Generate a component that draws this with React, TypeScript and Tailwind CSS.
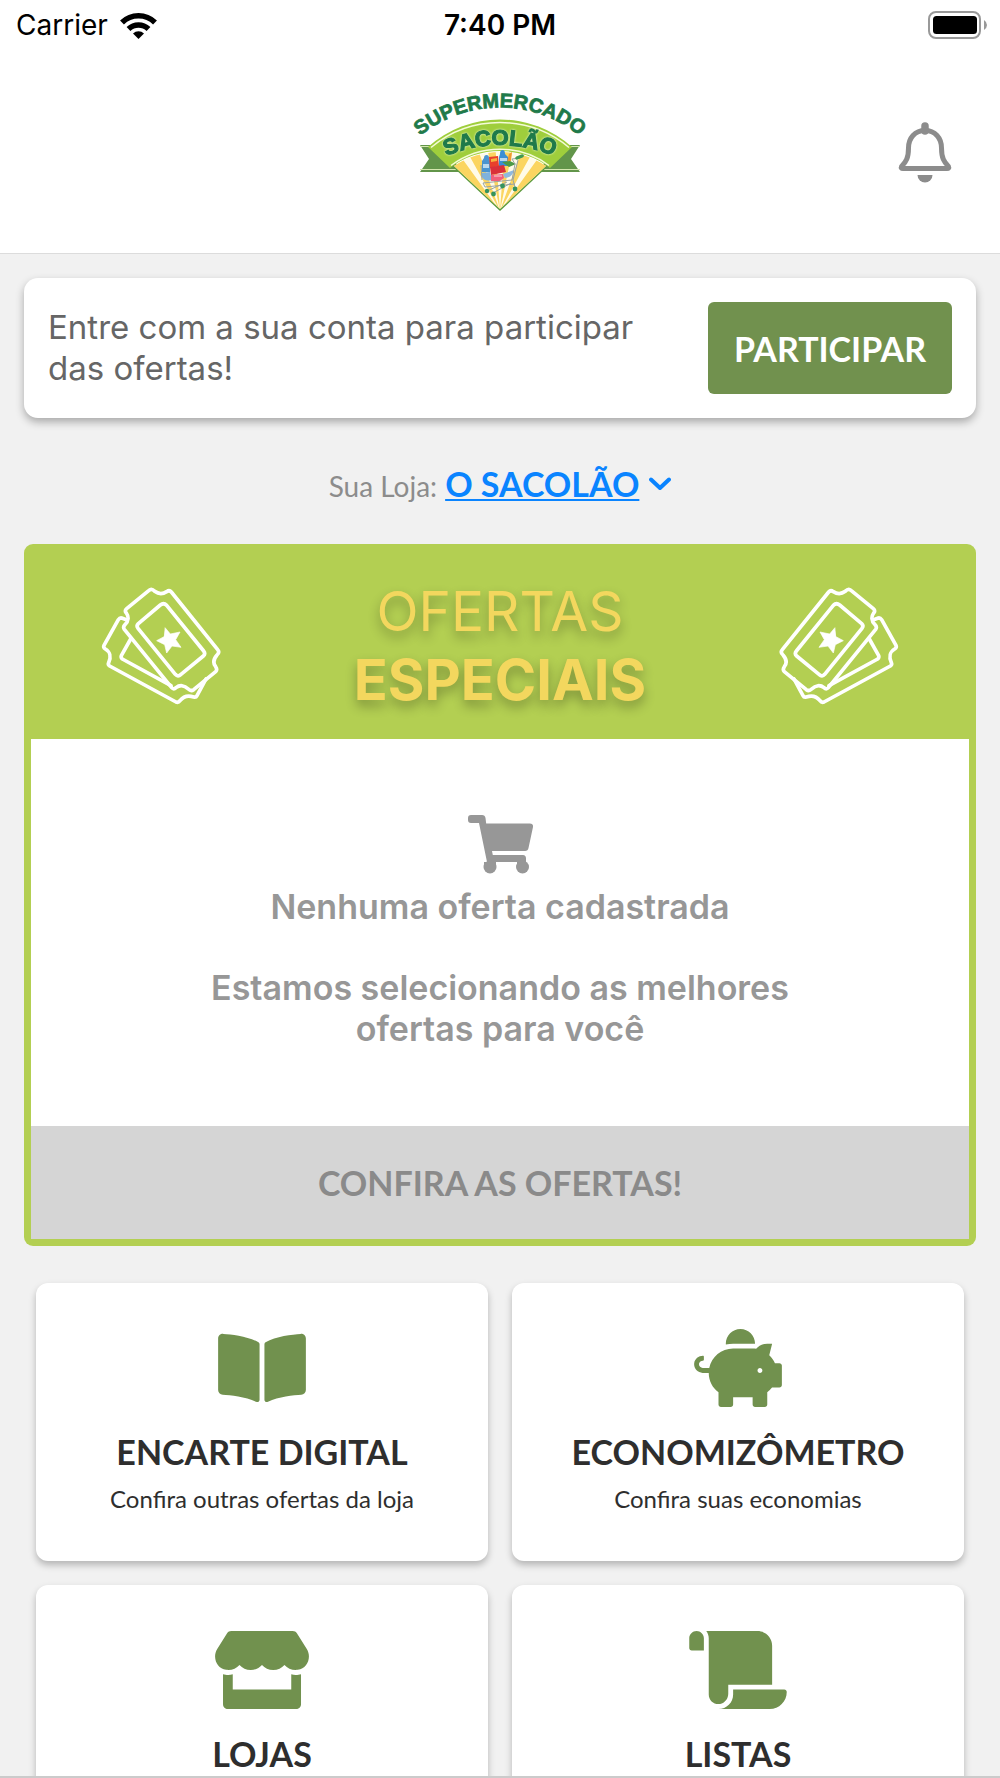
import React from 'react';
import type { IconType } from 'react-icons';
import { FaBookOpen, FaPiggyBank, FaScroll, FaStore } from 'react-icons/fa';

type Shortcut = {
  title: string;
  subtitle: string;
  icon: IconType;
};

const shortcuts: Shortcut[] = [
  { title: 'ENCARTE DIGITAL', subtitle: 'Confira outras ofertas da loja', icon: FaBookOpen },
  { title: 'ECONOMIZÔMETRO', subtitle: 'Confira suas economias', icon: FaPiggyBank },
  { title: 'LOJAS', subtitle: 'Encontre a loja mais próxima', icon: FaStore },
  { title: 'LISTAS', subtitle: 'Crie sua lista de compras', icon: FaScroll },
];

function StatusBar() {
  return (
    <div className="grid grid-cols-3 items-center h-[50px] px-3 text-black font-['Inter',sans-serif] text-[28px]">
      <div className="flex items-center gap-3 pl-1">
        <span>Carrier</span>
        <svg width="37" height="27" viewBox="0 0 37 27" fill="none" stroke="#000" strokeWidth="5.500">
          <path d="M2 10.500a23.500 23.500 0 0 1 33 0" />
          <path d="M8.500 17a14.500 14.500 0 0 1 20 0" />
          <path d="M18.500 27l-5.500-5.500a8 8 0 0 1 11 0z" fill="#000" stroke="none" />
        </svg>
      </div>
      <span className="text-center font-semibold">7:40 PM</span>
      <svg className="justify-self-end" width="60" height="28" viewBox="0 0 60 28">
        <rect x="1" y="1" width="51" height="26" rx="7" fill="none" stroke="#999" strokeWidth="2" />
        <rect x="5" y="5" width="44" height="18" rx="3.500" fill="#000" />
        <path d="M56 9q3 2 3 5t-3 5z" fill="#999" />
      </svg>
    </div>
  );
}

function Logo() {
  return (
    <svg width="200" height="134" viewBox="10 15 200 134" role="img" aria-label="Supermercado Sacolão">
      <defs>
        <path id="arc-top" d="M29 67A126 126 0 0 1 191 67" />
        <path id="arc-band" d="M54 87A138 138 0 0 1 166 87" />
        <clipPath id="fan">
          <path d="M64 96A82 82 0 0 1 156 96L110 139z" />
        </clipPath>
      </defs>

      {/* ribbon tails */}
      <path d="M30 75H58L70 102H30L39 89z" fill="#62954a" />
      <path d="M190 75H162L150 102H190L181 89z" fill="#62954a" />
      <path d="M30 76.500H50M30 99.500H66M190 76.500H170M190 99.500H154" stroke="#d5e8b0" strokeWidth="1" />

      {/* fan with sun rays */}
      <path d="M63 97L110 141L157 97z" fill="#5d9a3d" />
      <g clipPath="url(#fan)">
        <rect x="60" y="70" width="100" height="72" fill="#fffbe8" />
        <path
          d="M110 141L55 88L66 80zM110 141L74 76L86 74zM110 141L96 72L105 72zM110 141L115 72L124 72zM110 141L134 74L146 76zM110 141L154 80L165 88z"
          fill="#fbd560"
        />
      </g>

      {/* band */}
      <path d="M38 77A108 108 0 0 1 182 77L160 98A82 82 0 0 0 60 98z" fill="#9fce3c" />
      <path d="M41 77.500A108 108 0 0 1 179 77.500" fill="none" stroke="#f4fbd8" strokeWidth="1.500" />
      <path d="M61 95.500A82 82 0 0 1 159 95.500" fill="none" stroke="#f4fbd8" strokeWidth="1.500" />

      {/* shopping cart */}
      <path d="M94 88q0-3 2.500-3t2.500 3l1 3v11h-8V91z" fill="#4a94d0" />
      <path d="M93 94h6v4h-6z" fill="#b9d8ee" />
      <path d="M99 87l9-1 1 10-9 2z" fill="#e8402c" />
      <path d="M101 89l6-1v3l-6 1z" fill="#f7b23c" />
      <path d="M110 84q0-4 2.500-4t2.500 4l3 3v9h-9v-9z" fill="#3b8fd4" />
      <path d="M110 88h7v3h-7z" fill="#b9d8ee" />
      <path d="M117 92l2-8 3-2-1 9z" fill="#f09a30" />
      <path d="M100 97l14-2 2 7-15 3z" fill="#d9303a" />
      <path d="M91 103l9-1 2 8q-7 2-10-3z" fill="#7fb2dc" />
      <path d="M101 105l12-1 1 4-4 3h-9z" fill="#f0607c" />
      <path d="M104 106l8 0" stroke="#fbd3dc" strokeWidth="1" />
      <path d="M113 104l11-4q-2 8-9 8z" fill="#8fb9e0" />
      <path d="M112 92l8-1 6 3-7 3z" fill="#4c9a47" />
      <path
        d="M130 88l-8 1 3 5-3 16-29 3 2 4 30-3M91 95l1 15M128 90l-5 20 2 7M97 121l20-9M103 123l18-10"
        fill="none"
        stroke="#98a3a4"
        strokeWidth="1"
      />
      <path d="M127 88l5-2" stroke="#3f9a52" strokeWidth="3.500" strokeLinecap="round" />
      <circle cx="97" cy="121" r="2.200" fill="#35935e" />
      <circle cx="103.500" cy="124" r="2.400" fill="#35935e" />
      <circle cx="112.500" cy="116" r="2.400" fill="#35935e" />
      <circle cx="125" cy="119" r="2.400" fill="#35935e" />

      <text
        className="font-['Liberation_Sans',sans-serif] font-bold text-[20px]"
        fill="#1f7a4a"
        stroke="#1f7a4a"
        strokeWidth="0.800"
        textAnchor="middle"
      >
        <textPath href="#arc-top" startOffset="50%">
          SUPERMERCADO
        </textPath>
      </text>
      <text
        className="font-['Liberation_Sans',sans-serif] font-bold text-[22px] drop-shadow-[0_0_1px_#f4fbd8]"
        fill="#1f7a4a"
        stroke="#1f7a4a"
        strokeWidth="1.200"
        textAnchor="middle"
      >
        <textPath href="#arc-band" startOffset="50%">
          SACOLÃO
        </textPath>
      </text>
    </svg>
  );
}

function BellIcon() {
  return (
    <svg width="54" height="61" viewBox="0 0 54 61">
      <path
        d="M27 8.500C17 8.500 10.500 16 10.500 26C10.500 36 8 40 3.500 44.500Q2.500 46.500 5 46.500H49Q51.500 46.500 50.500 44.500C46 40 43.500 36 43.500 26C43.500 16 37 8.500 27 8.500z"
        fill="none"
        stroke="#8c8c8c"
        strokeWidth="5"
        strokeLinejoin="round"
      />
      <path d="M27 4v5" stroke="#8c8c8c" strokeWidth="7.500" strokeLinecap="round" />
      <path d="M19.500 53h15a7.500 7.500 0 0 1-15 0z" fill="#8c8c8c" />
    </svg>
  );
}

function CartIcon() {
  return (
    <svg width="65" height="59" viewBox="0 0 65 59" fill="currentColor">
      <path d="M3 0H14Q17 0 17.500 3L18.200 8.500H62Q65.500 8.500 65 12L60.500 33Q60 36 57 36H24L24.800 40H55Q58 40 58 43.500V47H19L11 8H3Q0 8 0 5V3Q0 0 3 0z" />
      <path d="M16 47h12v4H16zM49 46h9v6h-9z" />
      <circle cx="22" cy="52" r="6.500" />
      <circle cx="54.500" cy="52" r="6.500" />
    </svg>
  );
}

function TicketsIcon({ className }: { className?: string }) {
  return (
    <svg
      className={className}
      width="122"
      height="120"
      viewBox="299 165 366 360"
      fill="none"
      stroke="#fff"
      strokeWidth="11"
      strokeLinecap="round"
      strokeLinejoin="round"
    >
      <path d="M446 178L379 233Q372 239 378 246C385 256 386 270 374 281Q367 288 372 295L514 470Q520 477 527 470C538 461 552 462 564 474Q572 482 580 476L646 422Q652 416 646 407C638 397 637 387 650 372Q659 364 652 356L513 183Q507 176 499 182C488 189 474 189 463 181Q454 171 446 178z" />
      <path d="M480 222L414 278Q407 285 413 292L525 430Q533 439 541 431L609 375Q617 368 610 360L499 223Q490 214 480 222z" />
      <path d="M378 266L364 261Q358 260 354 266L311 343Q308 349 315 354C329 362 333 378 325 395Q322 401 328 405L527 513Q534 516 539 509C550 495 564 492 580 498Q587 500 590 494L617 444" />
      <path d="M391 324L363 374Q361 380 366 384L512 464" />
      <path
        d="M495 291L510 309L539 303L526 326L542 349L515 345L499 366L493 341L469 329L491 317z"
        fill="#fff"
        strokeWidth="2"
      />
    </svg>
  );
}

function ShortcutCard({ title, subtitle, icon: Icon }: Shortcut) {
  return (
    <button className="flex flex-col items-center bg-white rounded-xl pt-[46px] pb-12 text-[#2e2e2e] shadow-[0_4px_7px_rgba(0,0,0,0.25)]">
      <Icon className="h-[78px] w-[98px] text-[#71914e]" />
      <span className="mt-6 text-[34px] leading-[41px] font-bold">{title}</span>
      <span className="mt-[13px] text-2xl leading-7">{subtitle}</span>
    </button>
  );
}

export default function App() {
  return (
    <div className="flex flex-col h-screen bg-[#f1f1f1] font-['Lato',sans-serif]">
      <header className="bg-white border-b border-[#dcdcdc]">
        <StatusBar />
        <div className="grid grid-cols-3 items-center px-12 pt-[35px] pb-[34px]">
          <span />
          <div className="flex justify-center">
            <Logo />
          </div>
          <button aria-label="Notificações" className="justify-self-end">
            <BellIcon />
          </button>
        </div>
      </header>

      <main className="flex-1 min-h-0 overflow-y-auto [scrollbar-width:none] px-6 pt-6">
        <section className="flex items-center justify-between gap-6 bg-white rounded-[14px] p-6 shadow-[0_4px_8px_rgba(0,0,0,0.3)]">
          <p className="flex-1 font-['Inter',sans-serif] text-[33px] leading-[41px] text-[#666]">
            Entre com a sua conta para participar das ofertas!
          </p>
          <button className="h-[92px] px-[26px] rounded-md bg-[#71914e] text-white text-[34px] font-bold">
            PARTICIPAR
          </button>
        </section>

        <div className="flex items-baseline justify-center gap-2 mt-[45px] text-[28px] leading-[41px] text-[#8c8c8c]">
          <span>Sua Loja:</span>
          <button className="flex items-center gap-[10px] text-[34px] font-bold text-[#0a84ff]">
            <span className="underline decoration-2 underline-offset-2">O SACOLÃO</span>
            <svg width="22" height="14" viewBox="0 0 22 14" fill="none" stroke="currentColor" strokeWidth="4">
              <path d="M2 2.500l9 8.500 9-8.500" strokeLinecap="round" strokeLinejoin="round" />
            </svg>
          </button>
        </div>

        <section className="mt-[37px] rounded-[9px] bg-[#b3cf52] px-[7px] pb-[7px]">
          <div className="flex items-center justify-between h-[195px] px-[69px] pt-2">
            <TicketsIcon />
            <h2 className="text-center font-['Inter',sans-serif] text-[#f3d75e] [text-shadow:0_6px_12px_rgba(0,0,0,0.3)]">
              <span className="block text-[55px] leading-[69px] font-normal">OFERTAS</span>
              <span className="block text-[56px] leading-[69px] font-bold">ESPECIAIS</span>
            </h2>
            <TicketsIcon className="-scale-x-100" />
          </div>
          <div className="flex flex-col items-center bg-white pt-[76px] pb-[77px] text-center font-['Inter',sans-serif] text-[34px] leading-[41px] font-semibold text-[#979797]">
            <CartIcon />
            <p className="mt-3">Nenhuma oferta cadastrada</p>
            <p className="mt-10 max-w-[640px]">Estamos selecionando as melhores ofertas para você</p>
          </div>
          <button
            disabled
            className="block w-full h-[113px] bg-[#d5d5d5] text-[34px] font-bold text-[#8a8a8a]"
          >
            CONFIRA AS OFERTAS!
          </button>
        </section>

        <div className="grid grid-cols-2 gap-6 px-3 mt-[37px] pb-9">
          {shortcuts.map((item) => (
            <ShortcutCard key={item.title} {...item} />
          ))}
        </div>
      </main>

      <footer className="border-t-2 border-[#cbcbcb]" />
    </div>
  );
}
